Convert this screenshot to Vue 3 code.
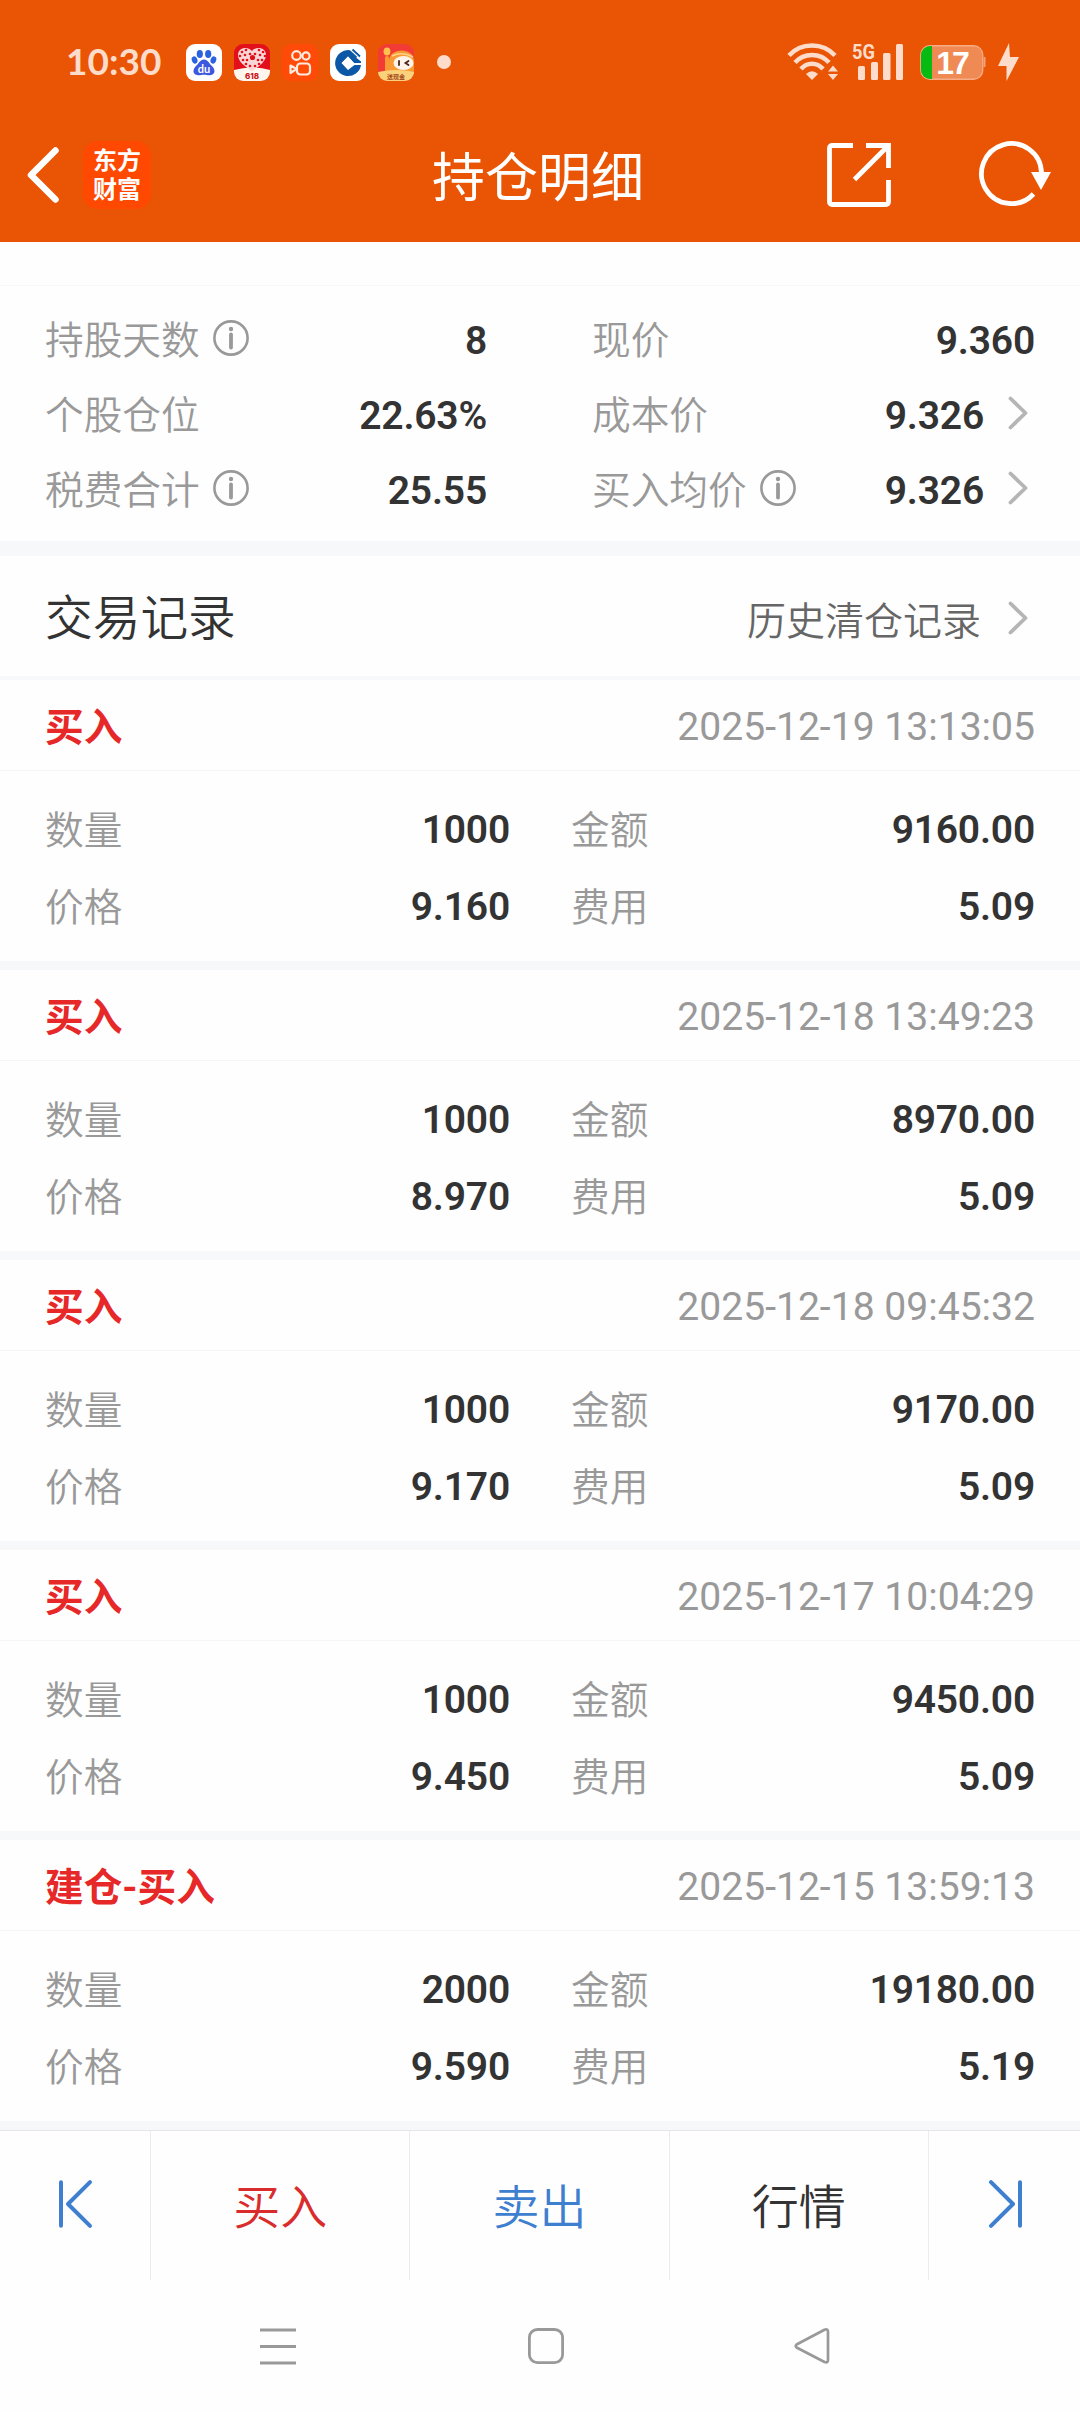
<script setup>
const summary = [
  [
    { label: '持股天数', info: true, value: '8' },
    { label: '个股仓位', value: '22.63%' },
    { label: '税费合计', info: true, value: '25.55' },
  ],
  [
    { label: '现价', value: '9.360' },
    { label: '成本价', value: '9.326', link: true },
    { label: '买入均价', info: true, value: '9.326', link: true },
  ],
]

const records = [
  { type: '买入', time: '2025-12-19 13:13:05', qty: '1000', amount: '9160.00', price: '9.160', fee: '5.09' },
  { type: '买入', time: '2025-12-18 13:49:23', qty: '1000', amount: '8970.00', price: '8.970', fee: '5.09' },
  { type: '买入', time: '2025-12-18 09:45:32', qty: '1000', amount: '9170.00', price: '9.170', fee: '5.09' },
  { type: '买入', time: '2025-12-17 10:04:29', qty: '1000', amount: '9450.00', price: '9.450', fee: '5.09' },
  { type: '建仓-买入', time: '2025-12-15 13:59:13', qty: '2000', amount: '19180.00', price: '9.590', fee: '5.19' },
]

const heartDots = [
  [8, 8], [12, 6], [25, 6], [29, 8], [6, 12], [11, 11], [16, 10], [21, 10], [26, 11], [31, 12],
  [9, 16], [13, 16], [24, 16], [28, 16], [12, 20], [25, 20], [16, 22], [21, 22],
]
</script>

<template>
  <div class="screen">
    <header class="top">
      <div class="status">
        <span class="clock">10:30</span>
        <div class="apps">
          <svg width="36" height="37" viewBox="0 0 36 37">
            <rect width="36" height="37" rx="9" fill="#fff" />
            <g fill="#2a62e0">
              <ellipse cx="13.8" cy="10" rx="3.1" ry="4.1" />
              <ellipse cx="22.2" cy="10" rx="3.1" ry="4.1" />
              <ellipse cx="8.6" cy="16" rx="2.8" ry="3.7" transform="rotate(-20 8.6 16)" />
              <ellipse cx="27.4" cy="16" rx="2.8" ry="3.7" transform="rotate(20 27.4 16)" />
            </g>
            <path d="M18 15.500c4 0 5 4 8 6.500c3 3 4 8-1 9c-3 .6-4-.3-7-.3s-4 .9-7 .3c-5-1-4-6-1-9c3-2.500 4-6.500 8-6.500z" fill="#3c58de" />
            <text x="18" y="29" text-anchor="middle" class="du">du</text>
          </svg>
          <svg width="36" height="37" viewBox="0 0 36 37">
            <rect width="36" height="37" rx="9" fill="#e3101c" />
            <path d="M0 26q18-5 36 0v2a9 9 0 0 1-9 9H9a9 9 0 0 1-9-9z" fill="#fff6ee" />
            <path d="M18 27C10 22 4 17 4 11c0-8 10-9 14-4c4-5 14-4 14 4c0 6-6 11-14 16z" fill="#f9d6d6" />
            <circle v-for="(d, i) in heartDots" :key="i" :cx="d[0]" :cy="d[1]" r="1.300" fill="#e3101c" />
            <circle cx="18.500" cy="13.500" r="2.600" fill="#e3101c" />
            <text x="18" y="35" text-anchor="middle" class="sale">618</text>
          </svg>
          <svg width="36" height="37" viewBox="0 0 36 37">
            <rect width="36" height="37" rx="9" fill="#ff4a08" />
            <g fill="none" stroke="#ffeadf" stroke-width="2.200" stroke-linejoin="round">
              <circle cx="14.500" cy="11.500" r="4.300" />
              <circle cx="24" cy="12" r="3.600" />
              <rect x="15" y="19.500" width="13" height="11" rx="3.200" />
              <path d="M8.500 21.500l6 3.500l-6 4z" />
            </g>
          </svg>
          <svg width="36" height="37" viewBox="0 0 36 37">
            <rect width="36" height="37" rx="9" fill="#fff" />
            <path d="M20 6.200A13 13 0 1 0 31 21H24.500L18 26l-6.500-7L18 12.500l6 6.500h7v-1.500L24 12z" fill="#0c57a6" />
            <path d="M18 12.500l6 6.500l-6 6.500l-6-6.500z" fill="#fff" />
            <path d="M22.500 5.500l7.500 7M20 7.500l6.500 6" stroke="#0c57a6" stroke-width="1.800" />
          </svg>
          <svg width="36" height="37" viewBox="0 0 36 37">
            <rect width="36" height="37" rx="9" fill="#f13b34" />
            <path d="M11 30V17c0-14 25-14 25 0v13z" fill="#f99a35" />
            <path d="M14 12q10-5 21 1" fill="none" stroke="#ffd58a" stroke-width="1.500" />
            <ellipse cx="9" cy="7.500" rx="3.400" ry="4" fill="#ffc14d" />
            <path d="M9 14v12" stroke="#f99a35" stroke-width="4" stroke-linecap="round" />
            <ellipse cx="25.500" cy="19" rx="10" ry="7" fill="#fff4ea" />
            <path d="M21 17v4M30.500 17l-3 2l3 2" fill="none" stroke="#4a2620" stroke-width="1.800" stroke-linecap="round" />
            <path d="M0 28q18-4 36 0a9 9 0 0 1-9 9H9a9 9 0 0 1-9-9z" fill="#fbd27b" />
            <text x="18" y="35" text-anchor="middle" class="cash">送现金</text>
          </svg>
        </div>
        <i class="more"></i>
        <div class="signals">
          <svg width="52" height="38" viewBox="0 0 52 38">
            <g fill="none" stroke="#fddccb" stroke-width="4.500">
              <path d="M2 12.500C14-1 36-1 48 12.500" />
              <path d="M8 19.500C17 9.500 33 9.500 42 19.500" />
              <path d="M14 26C20 19 30 19 36 26" />
            </g>
            <path d="M19 31q6-5.500 12 0l-6 6z" fill="#fddccb" />
            <path d="M41 28.500l5-6l5 6zM41 31h10l-5 6z" fill="#fddccb" />
          </svg>
          <svg class="cell" width="52" height="38" viewBox="0 0 52 38">
            <text x="0" y="16" textLength="23" lengthAdjust="spacingAndGlyphs" class="five">5G</text>
            <g fill="#fddccb">
              <rect x="6" y="23" width="7" height="14" rx="1.500" />
              <rect x="19" y="19" width="7" height="18" rx="1.500" />
              <rect x="31" y="10" width="7.500" height="27" rx="1.500" />
              <rect x="44" y="1" width="7" height="36" rx="1.500" />
            </g>
          </svg>
          <svg class="battery" width="67" height="36" viewBox="0 0 67 36">
            <rect x=".75" y=".75" width="62" height="33.500" rx="9" fill="#f08a55" stroke="#f6ac85" stroke-width="1.300" />
            <path d="M12 1H10a9 9 0 0 0-9 9v15a9 9 0 0 0 9 9h2z" fill="#07bb12" />
            <path d="M63.500 12h2v10h-2z" fill="#f3a078" />
            <text x="32" y="29" text-anchor="middle" class="pct">17</text>
          </svg>
          <svg class="bolt" width="21" height="38" viewBox="0 0 21 38">
            <path d="M11 0L0 23h8.500v15L21 14h-9z" fill="#fddccb" />
          </svg>
        </div>
      </div>
      <div class="titlebar">
        <svg class="back" width="34" height="58" viewBox="0 0 34 58">
          <path d="M29.500 4.500L5 29l24.500 24.500" fill="none" stroke="#fff" stroke-width="6.500" stroke-linecap="round" stroke-linejoin="round" />
        </svg>
        <div class="brand"><span>东方</span><span>财富</span></div>
        <h1>持仓明细</h1>
        <svg class="share" width="64" height="64" viewBox="0 0 64 64">
          <path d="M26 2.500H5a2.500 2.500 0 0 0-2.500 2.500v54A2.500 2.500 0 0 0 5 61.500h54a2.500 2.500 0 0 0 2.500-2.500V37M39 2.500h22.500V25M61 3L27.500 36.500" fill="none" stroke="#fff" stroke-width="4.800" />
        </svg>
        <svg class="reload" width="74" height="66" viewBox="0 0 74 66">
          <path d="M54.500 52A30 30 0 1 1 62.500 31" fill="none" stroke="#fff" stroke-width="4.800" />
          <path d="M52 30h20l-10 18z" fill="#fff" />
        </svg>
      </div>
    </header>

    <section class="summary">
      <div v-for="(col, c) in summary" :key="c" class="col">
        <div v-for="item in col" :key="item.label" class="line">
          <span class="label">{{ item.label }}</span>
          <svg v-if="item.info" class="info" width="36" height="36" viewBox="0 0 36 36">
            <circle cx="18" cy="18" r="16.600" fill="none" stroke="#999" stroke-width="2.600" />
            <circle cx="18" cy="9" r="2.200" fill="#999" />
            <path d="M18 14.500v13" stroke="#999" stroke-width="3.800" stroke-linecap="round" />
          </svg>
          <b>{{ item.value }}</b>
          <svg v-if="item.link" class="chev" width="20" height="34" viewBox="0 0 20 34">
            <path d="M2.500 2.500L17.500 17L2.500 31.500" fill="none" stroke="#b5b5b5" stroke-width="3.800" stroke-linecap="round" stroke-linejoin="round" />
          </svg>
        </div>
      </div>
    </section>

    <section class="heading">
      <h2>交易记录</h2>
      <span class="history">历史清仓记录</span>
      <svg class="chev" width="20" height="34" viewBox="0 0 20 34">
        <path d="M2.500 2.500L17.500 17L2.500 31.500" fill="none" stroke="#b5b5b5" stroke-width="3.800" stroke-linecap="round" stroke-linejoin="round" />
      </svg>
    </section>

    <article v-for="r in records" :key="r.time" class="record">
      <div class="record-head">
        <strong>{{ r.type }}</strong>
        <time>{{ r.time }}</time>
      </div>
      <div class="grid">
        <span class="label">数量</span><b>{{ r.qty }}</b>
        <span class="label second">金额</span><b>{{ r.amount }}</b>
        <span class="label">价格</span><b>{{ r.price }}</b>
        <span class="label second">费用</span><b>{{ r.fee }}</b>
      </div>
    </article>

    <nav class="actions">
      <button class="edge">
        <svg width="36" height="48" viewBox="0 0 36 48">
          <path d="M4 2.200v43.600M33 2.200L11 24l22 21.800" fill="none" stroke="#3f7fcf" stroke-width="4" stroke-linecap="round" stroke-linejoin="round" />
        </svg>
      </button>
      <button class="buy">买入</button>
      <button class="sell">卖出</button>
      <button>行情</button>
      <button class="edge">
        <svg width="36" height="48" viewBox="0 0 36 48">
          <path d="M32 2.200v43.600M3 2.200L25 24L3 45.800" fill="none" stroke="#3f7fcf" stroke-width="4" stroke-linecap="round" stroke-linejoin="round" />
        </svg>
      </button>
    </nav>

    <footer class="system">
      <svg width="36" height="38" viewBox="0 0 36 38">
        <path d="M0 3h36M0 19.500h36M0 36h36" stroke="#999" stroke-width="3" />
      </svg>
      <svg width="36" height="38" viewBox="0 0 36 38">
        <rect x="1.400" y="2.500" width="33.200" height="33.200" rx="8" fill="none" stroke="#999" stroke-width="2.800" />
      </svg>
      <svg width="36" height="38" viewBox="0 0 36 38">
        <path d="M30.500 2.700L3 17.200q-2.600 1.800 0 3.600L30.500 35q3.500 1.300 3.500-2V4.700q0-3.300-3.500-2z" fill="none" stroke="#999" stroke-width="2.700" stroke-linejoin="round" />
      </svg>
    </footer>
  </div>
</template>

<style>
body {
  margin: 0;
  background: #fefefe;
}
</style>

<style scoped>
.screen {
  width: 1080px;
  height: 2412px;
  overflow: hidden;
  display: flex;
  flex-direction: column;
  background: #fefefe;
  color: #333;
  font-family: Roboto, "Noto Sans CJK SC", sans-serif;
  font-size: 39px;
}
svg {
  display: block;
  flex: none;
  overflow: visible;
}
.top {
  height: 242px;
  flex: none;
  background: #e95504;
  color: #fff;
}
.status {
  height: 124px;
  box-sizing: border-box;
  display: flex;
  align-items: center;
  padding-left: 66px;
  padding-right: 61px;
}
.clock {
  width: 120px;
  margin-top: -3px;
  font: 700 37px/44px Lato, sans-serif;
  color: #fddccb;
}
.apps {
  display: flex;
  gap: 12px;
}
.more {
  width: 14px;
  height: 14px;
  margin-left: 23px;
  border-radius: 50%;
  background: #fddccb;
}
.signals {
  display: flex;
  align-items: center;
  margin-left: auto;
}
.cell {
  margin-left: 13px;
}
.battery {
  margin: 2px 0 0 16px;
}
.bolt {
  margin-left: 11px;
}
.du {
  font: 700 11px Lato, sans-serif;
  fill: #fff;
}
.sale {
  font: 800 8px Inter, sans-serif;
  fill: #c8141c;
}
.cash {
  font: 700 6px "Noto Sans CJK SC", sans-serif;
  fill: #a5481a;
}
.five {
  font: 700 21px Roboto, sans-serif;
  fill: #fddccb;
}
.pct {
  font: 700 32px "Liberation Sans", sans-serif;
  fill: #fff;
  letter-spacing: -2px;
}
.titlebar {
  height: 101px;
  display: flex;
  align-items: center;
}
.back {
  margin-left: 26px;
}
.brand {
  width: 68px;
  height: 68px;
  margin-left: 23px;
  box-sizing: border-box;
  padding-top: 3px;
  border-radius: 15px;
  background: #ff4800;
  display: flex;
  flex-direction: column;
  align-items: center;
  font: 700 24px/29px "Noto Sans CJK SC", sans-serif;
}
h1 {
  width: 218px;
  margin: 9px 0 0 281px;
  font-size: 53px;
  line-height: 70px;
  font-weight: 400;
  white-space: nowrap;
}
.share {
  margin-left: 177px;
}
.reload {
  margin-left: 88px;
}
.summary {
  height: 299px;
  box-sizing: border-box;
  flex: none;
  display: flex;
  padding: 60px 45px 0;
  background: linear-gradient(#f8f8f8, #f8f8f8) 0 43px / 100% 1px no-repeat;
}
.col:first-child {
  width: 442px;
}
.col:last-child {
  width: 443px;
  margin-left: 105px;
}
.line {
  height: 75px;
  display: flex;
  align-items: center;
}
.label {
  color: #999;
  font-size: 38.7px;
  font-weight: 350;
  margin-top: -5px;
}
.info {
  margin: -3px 0 0 13px;
}
b {
  font-weight: 600;
  letter-spacing: -0.2px;
  margin-left: auto;
}
.line b {
  margin-top: 2px;
}
.chev {
  margin: -4px 7px 0 24px;
}
.heading {
  height: 139px;
  box-sizing: border-box;
  flex: none;
  display: flex;
  align-items: center;
  padding: 0 45px;
  border-top: 15px solid #f6f8fa;
  border-bottom: 4px solid #f7f8f9;
}
h2 {
  margin: 6px auto 0 0;
  font-size: 47.7px;
  font-weight: 350;
  line-height: 60px;
}
.history {
  color: #666;
  font-weight: 350;
  margin-top: 3px;
}
.heading .chev {
  margin: 3px 7px 0 27px;
}
.record {
  height: 290px;
  box-sizing: border-box;
  flex: none;
  border-bottom: 9px solid #f6f8fa;
}
.record-head {
  height: 91px;
  box-sizing: border-box;
  border-bottom: 1px solid #f5f6f8;
  display: flex;
  align-items: center;
  justify-content: space-between;
  padding: 0 45px;
}
strong {
  color: #e62828;
  font-size: 38.7px;
  font-weight: 700;
  margin-top: -2px;
}
time {
  color: #999;
  font-size: 39.100px;
  margin-top: 3px;
}
.grid {
  display: grid;
  grid-template-columns: 120px 345px 180px 345px;
  grid-auto-rows: 77px;
  align-items: center;
  padding: 20px 45px 0;
}
.second {
  padding-left: 61px;
}
.actions {
  height: 150px;
  box-sizing: border-box;
  flex: none;
  display: flex;
  border-top: 1px solid #e6e6e8;
}
button {
  flex: 1;
  display: flex;
  align-items: center;
  justify-content: center;
  padding: 4px 0 0;
  border: 0;
  border-right: 1px solid #ececec;
  background: none;
  color: #333;
  font: 350 47px/60px Roboto, "Noto Sans CJK SC", sans-serif;
}
.edge {
  flex: 0 0 151px;
  box-sizing: border-box;
  padding: 0 0 4px;
}
.edge:last-child {
  border-right: 0;
  padding-left: 4px;
}
.buy {
  color: #d92c2c;
}
.sell {
  color: #3f7fcf;
}
.system {
  flex: 1;
  display: flex;
  gap: 232px;
  padding: 47px 0 0 260px;
}
.system svg:last-child {
  margin-left: -2px;
}
</style>
